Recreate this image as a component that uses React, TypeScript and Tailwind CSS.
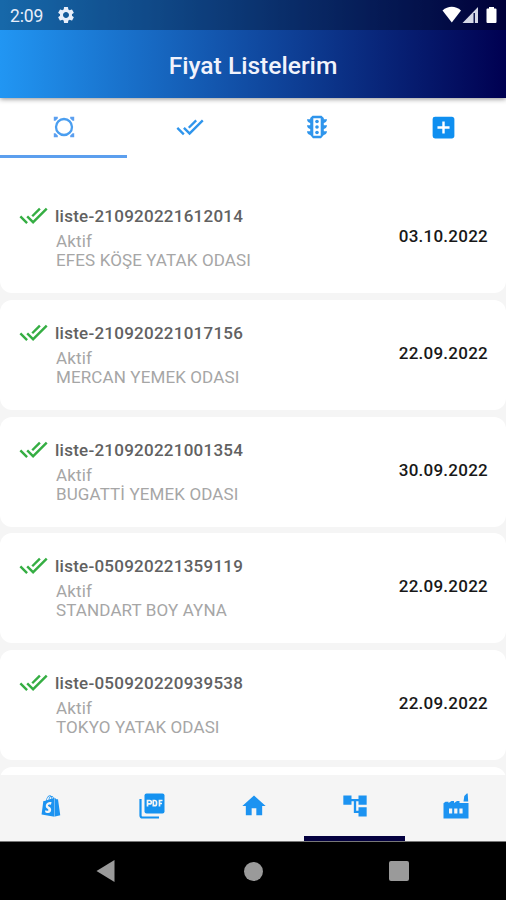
import type { ReactNode } from 'react';
import { MdAccountTree, MdAddBox, MdDoneAll, MdHome, MdSettings } from 'react-icons/md';
import { FaShopify } from 'react-icons/fa';

const lists = [
  { name: 'liste-210920221612014', product: 'EFES KÖŞE YATAK ODASI', date: '03.10.2022' },
  { name: 'liste-210920221017156', product: 'MERCAN YEMEK ODASI', date: '22.09.2022' },
  { name: 'liste-210920221001354', product: 'BUGATTİ YEMEK ODASI', date: '30.09.2022' },
  { name: 'liste-050920221359119', product: 'STANDART BOY AYNA', date: '22.09.2022' },
  { name: 'liste-050920220939538', product: 'TOKYO YATAK ODASI', date: '22.09.2022' },
];

function CircleFrameIcon() {
  return (
    <svg width="22" height="22" viewBox="0 0 22 22" fill="#5b9ff0">
      <circle cx="11" cy="11" r="8" fill="none" stroke="#4a9ef0" strokeWidth="2.300" />
      <path d="M.8.8h4v1.600L2.400 4.800H.8zM17.200.8h4v4h-1.600l-2.400-2.400zM21.200 17.200v4h-4v-1.600l2.400-2.400zM4.800 21.200h-4v-4h1.600l2.400 2.400z" />
    </svg>
  );
}

function TrafficIcon() {
  return (
    <svg width="22" height="24" viewBox="0 0 22 24" fill="#2f95ec">
      <path
        fillRule="evenodd"
        d="M6.500 .8h9l2.300 2.300v1.100H21c0 2-1.400 3.300-3.200 3.700v2.300H21c0 2-1.400 3.300-3.200 3.700v2.300H21c0 2-1.400 3.300-3.200 3.700L15 23.200H7l-2.800-3.300C2.400 19.500 1 18.200 1 16.200h3.200v-2.300C2.400 13.500 1 12.200 1 10.200h3.200V7.900C2.400 7.500 1 6.200 1 4.200h3.200V3.100zM7.300 3.200v17.600h7.400V3.200z"
      />
      <circle cx="11" cy="6.500" r="1.800" />
      <circle cx="11" cy="12" r="1.800" />
      <circle cx="11" cy="17.500" r="1.800" />
    </svg>
  );
}

function PdfIcon() {
  return (
    <svg width="26" height="26" viewBox="0 0 26 26">
      <path d="M1.500 6v16.500a2 2 0 0 0 2 2H20" fill="none" stroke="#1592f0" strokeWidth="2.200" />
      <rect x="5.500" y="0.500" width="20" height="20" rx="2" fill="#1592f0" />
      <path
        d="M8.500 13.500v-6h2.200a1.500 1.500 0 0 1 0 3.400H8.500M14.300 7.500v5.200h1.500a1.700 1.700 0 0 0 1.700-1.700V9.200a1.700 1.700 0 0 0-1.700-1.700zM20.500 13.500v-6h3M20.500 10.500h2.500"
        fill="none"
        stroke="#f5f5f5"
        strokeWidth="1.700"
      />
    </svg>
  );
}

function FactoryIcon() {
  return (
    <svg width="26" height="26" viewBox="0 0 26 26" fill="#1c93f1">
      <path
        fillRule="evenodd"
        d="M.5 25.500V10.300l2-1.500h3v1.300l3-2h2.500v2l3-2H16.500v2h9v15.400zM6 15.500v5h3.200v-5zm5.200 0v5h3.200v-5zm5.200 0v5h3.200v-5zM20.500 8.500l.8-5.500 2.500-2.500h.9l.5 8z"
      />
    </svg>
  );
}

function StatusBar() {
  return (
    <div className="flex h-[30px] items-center bg-black/30 pl-[10px] pr-[7px] text-[#e8eefa]">
      <span className="w-[46px] pt-px text-[17.500px] leading-[30px] tracking-[-0.100px]">2:09</span>
      <MdSettings className="size-[20px]" />
      <svg className="ml-auto" width="57" height="18" viewBox="0 0 57 18" fill="#ffffff">
        <path d="M.5 4.500C6-.4 13.500-.4 19 4.500L9.800 16.500z" />
        <path d="M20.500 17 36 1v16z" fill="#d5d8e6" />
        <path d="M31.500 7v10h1.500V7z" fill="#11184d" />
        <path d="M44.500 3.500a1 1 0 0 1 1-1H47V1h5v1.500h1.500a1 1 0 0 1 1 1V16a1 1 0 0 1-1 1h-8a1 1 0 0 1-1-1z" />
      </svg>
    </div>
  );
}

function Tab({ active, children }: { active?: boolean; children: ReactNode }) {
  return (
    <button
      className={`flex h-[60px] flex-1 items-center justify-center border-b-[3px] pl-px pt-px ${
        active ? 'border-[#5c9fee]' : 'border-transparent'
      }`}
    >
      {children}
    </button>
  );
}

function NavItem({ active, children }: { active?: boolean; children: ReactNode }) {
  return (
    <button className={`flex flex-1 justify-center border-b-[5px] pl-px pt-[16px] ${active ? 'border-[#03003f]' : 'border-transparent'}`}>
      <span className="flex size-[30px] items-center justify-center">{children}</span>
    </button>
  );
}

export default function App() {
  return (
    <div className="flex h-[900px] w-[506px] flex-col overflow-hidden bg-[#f5f5f5] font-['Roboto',sans-serif]">
      <header className="z-10 h-[98px] shrink-0 bg-linear-to-r/srgb from-[#2196f3] to-[#000051] shadow-[0_1px_5px_rgba(0,0,0,0.45)]">
        <StatusBar />
        <h1 className="pt-px text-center text-[24.600px] font-medium leading-[70px] text-[#f1f3fc]">Fiyat Listelerim</h1>
      </header>

      <nav className="flex shrink-0 bg-white text-[#2f95ec]">
        <Tab active><CircleFrameIcon /></Tab>
        <Tab><MdDoneAll className="size-[28px]" /></Tab>
        <Tab><TrafficIcon /></Tab>
        <Tab><MdAddBox className="size-[29px] text-[#0f8ff0]" /></Tab>
      </nav>

      <main className="min-h-0 flex-1 overflow-hidden">
        <div className="h-[40px] bg-white" />
        <ul className="-mt-[15px] flex flex-col gap-[6.800px]">
          {lists.map((item, i) => (
            <li
              key={item.name}
              className={`flex h-[110px] shrink-0 bg-white pl-[19px] pr-[18px] ${i === 0 ? 'rounded-b-[12px]' : 'rounded-[12px]'}`}
            >
              <MdDoneAll className="mt-[18px] size-[29px] shrink-0 text-[#35ae43]" />
              <div className="ml-[7px] flex-1 whitespace-nowrap pt-[23px]">
                <p className="text-[17px] font-medium leading-[20px] tracking-[0.250px] text-[#616161]">{item.name}</p>
                <p className="mt-[5px] pl-px text-[17px] leading-[20px] tracking-[0.120px] text-[#a6a6a6]">Aktif</p>
                <p className="pl-px text-[17px] leading-[19px] tracking-[0.120px] text-[#a6a6a6]">{item.product}</p>
              </div>
              <time className="pt-[43px] text-[17px] font-medium leading-[20px] tracking-[0.250px] text-[#181818]">{item.date}</time>
            </li>
          ))}
          <li className="h-[110px] shrink-0 rounded-[12px] bg-white" />
        </ul>
      </main>

      <nav className="flex h-[67px] shrink-0 border-b border-[#777777] bg-[#f5f5f5] text-[#1c93f1]">
        <NavItem><FaShopify className="size-[22px]" /></NavItem>
        <NavItem><PdfIcon /></NavItem>
        <NavItem><MdHome className="size-[28px]" /></NavItem>
        <NavItem active><MdAccountTree className="size-[28px]" /></NavItem>
        <NavItem><FactoryIcon /></NavItem>
      </nav>

      <footer className="flex h-[58px] shrink-0 items-center bg-black pl-[96px]">
        <svg width="19" height="22" viewBox="0 0 19 22" fill="#9a9a9a"><path d="M.5 11 18.500 0v22z" /></svg>
        <span className="ml-[129px] size-[19px] rounded-full bg-[#9a9a9a]" />
        <span className="ml-[126px] size-[20px] rounded-[2px] bg-[#9a9a9a]" />
      </footer>
    </div>
  );
}
